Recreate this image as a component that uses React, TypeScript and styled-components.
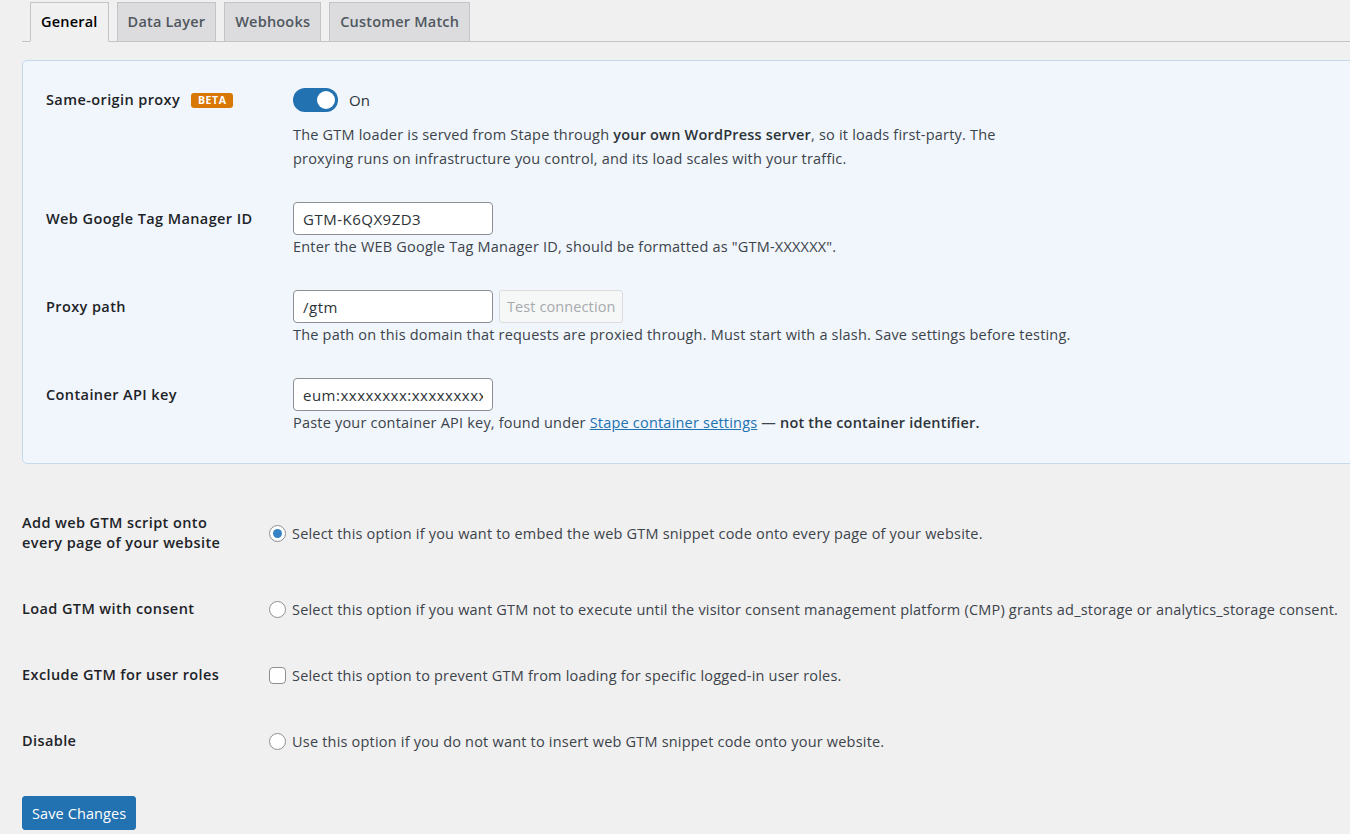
import styled, { createGlobalStyle } from 'styled-components';

const FONT = `"Open Sans", "Noto Sans", "Liberation Sans", sans-serif`;

const GlobalStyle = createGlobalStyle`
  html, body {
    margin: 0;
    padding: 0;
    background: #f0f0f1;
    overflow: hidden;
  }
  body {
    font-family: ${FONT};
    font-size: 14.5px;
    letter-spacing: 0.2px;
    color: #3c434a;
  }
  * { box-sizing: border-box; }
`;

const elements = {
  page: styled.div`
    width: 1420px;
    padding: 2px 0 0 22px;
  `,
  tabBar: styled.nav`
    display: flex;
    align-items: flex-end;
    gap: 8px;
    height: 40px;
    padding-left: 8px;
    border-bottom: 1px solid #c3c4c7;
  `,
  tab: styled.a<{ $active?: boolean }>`
    display: flex;
    align-items: center;
    height: 40px;
    margin-bottom: -1px;
    padding: 0 10px 1px;
    border: 1px solid #c3c4c7;
    border-bottom-color: ${(p) => (p.$active ? '#f0f0f1' : '#c3c4c7')};
    background: ${(p) => (p.$active ? '#f0f0f1' : '#dcdcde')};
    color: ${(p) => (p.$active ? '#000' : '#50575e')};
    font-size: 14.5px;
    font-weight: 600;
    letter-spacing: 0.2px;
    text-decoration: none;
    cursor: pointer;
  `,
  panel: styled.section`
    margin-top: 18px;
    padding: 25px 0 28px 23px;
    background: #f0f6fc;
    border: 1px solid #c5d9ed;
    border-radius: 5px;
  `,
  panelRow: styled.div`
    display: flex;
    & + & {
      margin-top: 31px;
    }
  `,
  panelLabel: styled.div<{ $line: number }>`
    flex: none;
    width: 247px;
    line-height: ${(p) => p.$line}px;
    font-weight: 600;
    letter-spacing: 0.4px;
    color: #1d2327;
  `,
  field: styled.div`
    display: flex;
    flex-direction: column;
  `,
  controlLine: styled.div<{ $height: number }>`
    display: flex;
    align-items: center;
    gap: 6px;
    height: ${(p) => p.$height}px;
  `,
  badge: styled.span`
    display: inline-flex;
    align-items: center;
    justify-content: center;
    width: 42px;
    height: 15px;
    margin-left: 7px;
    border-radius: 3px;
    background: #d97706;
    color: #fff;
    font-size: 10.5px;
    font-weight: 700;
    letter-spacing: 0.6px;
    line-height: 15px;
    vertical-align: 1px;
  `,
  toggle: styled.span<{ $on: boolean }>`
    position: relative;
    flex: none;
    width: 45px;
    height: 24px;
    border-radius: 12px;
    background: ${(p) => (p.$on ? '#2271b1' : '#8c8f94')};

    &::after {
      content: '';
      position: absolute;
      top: 3px;
      left: ${(p) => (p.$on ? '24px' : '3px')};
      width: 18px;
      height: 18px;
      border-radius: 50%;
      background: #fff;
    }
  `,
  toggleText: styled.span`
    margin-left: 5px;
    font-size: 15px;
    font-weight: 500;
    color: #2c3338;
  `,
  description: styled.p<{ $top?: number; $maxWidth?: number }>`
    margin: ${(p) => p.$top ?? 0}px 0 0;
    max-width: ${(p) => (p.$maxWidth ? `${p.$maxWidth}px` : 'none')};
    line-height: 24px;

    a {
      color: #2271b1;
      text-decoration: underline;
    }
    strong {
      font-weight: 600;
      color: #2c3338;
    }
  `,
  input: styled.input`
    width: 200px;
    height: 33px;
    padding: 0 9px;
    border: 1px solid #8c8f94;
    border-radius: 4px;
    background: #fff;
    color: #2c3338;
    font-family: ${FONT};
    font-size: 15px;
    letter-spacing: 0.5px;
    outline: none;
  `,
  secondaryButton: styled.button`
    height: 33px;
    padding: 0 7px;
    border: 1px solid #dcdcde;
    border-radius: 3px;
    background: #f6f7f7;
    color: #a7aaad;
    font-family: ${FONT};
    font-size: 14.5px;
    letter-spacing: 0.1px;
  `,
  optionTable: styled.div`
    margin-top: 26px;
  `,
  optionRow: styled.div`
    display: flex;
    align-items: center;
    padding: 23px 0;
  `,
  optionLabel: styled.div`
    flex: none;
    width: 210px;
    margin-right: 37px;
    line-height: 20px;
    font-weight: 600;
    letter-spacing: 0.4px;
    color: #1d2327;
  `,
  choice: styled.label`
    display: flex;
    align-items: center;
    gap: 6px;
    white-space: nowrap;
  `,
  radio: styled.input`
    appearance: none;
    flex: none;
    display: grid;
    place-items: center;
    width: 17px;
    height: 17px;
    margin: 0;
    border: 1px solid #8c8f94;
    border-radius: 50%;
    background: #fff;

    &:checked::before {
      content: '';
      width: 9px;
      height: 9px;
      border-radius: 50%;
      background: #3582c4;
    }
  `,
  checkbox: styled.input`
    appearance: none;
    flex: none;
    width: 17px;
    height: 17px;
    margin: 0;
    border: 1px solid #8c8f94;
    border-radius: 4px;
    background: #fff;
  `,
  primaryButton: styled.button`
    margin-top: 22px;
    height: 34px;
    padding: 0 9px;
    border: 1px solid #2271b1;
    border-radius: 3px;
    background: #2271b1;
    color: #fff;
    font-family: ${FONT};
    font-size: 14.5px;
    letter-spacing: 0.1px;
  `,
};

const tabs = ['General', 'Data Layer', 'Webhooks', 'Customer Match'];

const options = [
  {
    label: 'Add web GTM script onto every page of your website',
    type: 'radio',
    checked: true,
    text: 'Select this option if you want to embed the web GTM snippet code onto every page of your website.',
  },
  {
    label: 'Load GTM with consent',
    type: 'radio',
    checked: false,
    text: 'Select this option if you want GTM not to execute until the visitor consent management platform (CMP) grants ad_storage or analytics_storage consent.',
  },
  {
    label: 'Exclude GTM for user roles',
    type: 'checkbox',
    checked: false,
    text: 'Select this option to prevent GTM from loading for specific logged-in user roles.',
  },
  {
    label: 'Disable',
    type: 'radio',
    checked: false,
    text: 'Use this option if you do not want to insert web GTM snippet code onto your website.',
  },
];

function ProxyPanel(): JSX.Element {
  return (
    <elements.panel>
      <elements.panelRow>
        <elements.panelLabel $line={28}>
          Same-origin proxy <elements.badge>BETA</elements.badge>
        </elements.panelLabel>
        <elements.field>
          <elements.controlLine $height={28}>
            <elements.toggle $on />
            <elements.toggleText>On</elements.toggleText>
          </elements.controlLine>
          <elements.description $top={9} $maxWidth={712}>
            The GTM loader is served from Stape through <strong>your own WordPress server</strong>, so it
            loads first-party. The proxying runs on infrastructure you control, and its load scales with
            your traffic.
          </elements.description>
        </elements.field>
      </elements.panelRow>

      <elements.panelRow>
        <elements.panelLabel $line={33}>Web Google Tag Manager ID</elements.panelLabel>
        <elements.field>
          <elements.input defaultValue="GTM-K6QX9ZD3" />
          <elements.description>
            Enter the WEB Google Tag Manager ID, should be formatted as "GTM-XXXXXX".
          </elements.description>
        </elements.field>
      </elements.panelRow>

      <elements.panelRow>
        <elements.panelLabel $line={33}>Proxy path</elements.panelLabel>
        <elements.field>
          <elements.controlLine $height={33}>
            <elements.input defaultValue="/gtm" />
            <elements.secondaryButton disabled>Test connection</elements.secondaryButton>
          </elements.controlLine>
          <elements.description>
            The path on this domain that requests are proxied through. Must start with a slash. Save
            settings before testing.
          </elements.description>
        </elements.field>
      </elements.panelRow>

      <elements.panelRow>
        <elements.panelLabel $line={33}>Container API key</elements.panelLabel>
        <elements.field>
          <elements.input defaultValue="eum:xxxxxxxx:xxxxxxxxxxxxxxxxxxxx" />
          <elements.description>
            Paste your container API key, found under <a href="#">Stape container settings</a> —{' '}
            <strong>not the container identifier.</strong>
          </elements.description>
        </elements.field>
      </elements.panelRow>
    </elements.panel>
  );
}

export default function App(): JSX.Element {
  return (
    <>
      <GlobalStyle />
      <elements.page>
        <elements.tabBar>
          {tabs.map((t, i) => (
            <elements.tab key={t} $active={i === 0}>
              {t}
            </elements.tab>
          ))}
        </elements.tabBar>

        <ProxyPanel />

        <elements.optionTable>
          {options.map((o) => (
            <elements.optionRow key={o.label}>
              <elements.optionLabel>{o.label}</elements.optionLabel>
              <elements.choice>
                {o.type === 'radio' ? (
                  <elements.radio type="radio" name="gtm-mode" defaultChecked={o.checked} />
                ) : (
                  <elements.checkbox type="checkbox" defaultChecked={o.checked} />
                )}
                {o.text}
              </elements.choice>
            </elements.optionRow>
          ))}
        </elements.optionTable>

        <elements.primaryButton>Save Changes</elements.primaryButton>
      </elements.page>
    </>
  );
}
